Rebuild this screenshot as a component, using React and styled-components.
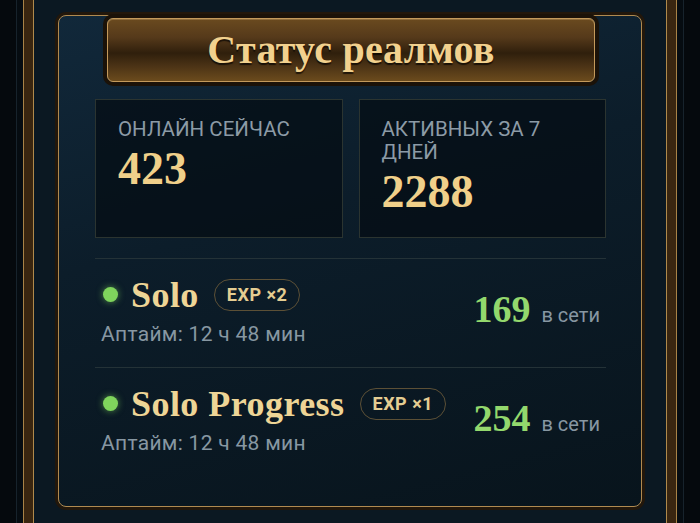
import React from "react";
import styled, { createGlobalStyle } from "styled-components";

const Global = createGlobalStyle`
  html, body { margin: 0; padding: 0; background: #05090d; }
  body { font-family: Roboto, "Noto Sans", sans-serif; }
  * { box-sizing: border-box; }
`;

const Page = styled.div`
  min-height: 523px;
  height: 100vh;
  background: #05090d;
  padding: 0 16px;
  display: flex;
`;

const FaintLine = styled.div`
  flex: 1;
  display: flex;
  border-left: 1px solid #17232c;
  border-right: 1px solid #17232c;
  background: #060c11;
  padding: 0 6px;
`;

const Rail = styled.div`
  flex: 1;
  display: flex;
  background: #3a2610;
  border-left: 1px solid #a98347;
  border-right: 1px solid #a98347;
  padding: 0 9px;
`;

const Inner = styled.div`
  flex: 1;
  background: #0b1822;
  border-left: 1px solid #b08a4c;
  border-right: 1px solid #b08a4c;
  padding: 15px 24px 0 24px;
`;

const Panel = styled.section`
  border: 1px solid #b08a50;
  border-radius: 8px;
  box-shadow: 0 0 0 3px #22170b;
  background: linear-gradient(165deg, #11283a 0%, #0c1d2a 40%, #08141c 100%);
  padding: 2px 35px 30px 36px;
  display: flex;
  flex-direction: column;
`;

const Banner = styled.header`
  align-self: center;
  width: 488px;
  height: 64px;
  margin-right: -1px;
  border: 1.5px solid #c49a5b;
  border-radius: 6px;
  box-shadow: 0 0 0 4px #1b1208, inset 0 1px 0 rgba(255, 220, 150, 0.25);
  background: linear-gradient(
    180deg,
    #6a4a1f 0%,
    #55391a 30%,
    #2f1f0c 55%,
    #4a3215 75%,
    #6b4b1d 100%
  );
  display: flex;
  align-items: center;
  justify-content: center;
`;

const Title = styled.h1`
  margin: 0;
  font-family: "Liberation Serif", "DejaVu Serif", serif;
  font-weight: 700;
  font-size: 40px;
  letter-spacing: 0.3px;
  color: #f2d18e;
  text-shadow: 0 2px 1px rgba(0, 0, 0, 0.65);
  line-height: 1;
`;

const Stats = styled.div`
  margin-top: 17px;
  display: grid;
  grid-template-columns: 1fr 1fr;
  gap: 16px;
`;

const StatBox = styled.div`
  border: 1px solid #2b3430;
  background: rgba(4, 13, 19, 0.72);
  padding: 18px 22px 19px;
`;

const StatLabel = styled.div`
  font-family: Roboto, sans-serif;
  font-size: 20.5px;
  line-height: 23px;
  color: #8c9ba6;
  text-transform: uppercase;
`;

const StatValue = styled.div`
  margin-top: 3px;
  font-family: "Liberation Serif", serif;
  font-weight: 700;
  font-size: 46px;
  line-height: 1.1;
  color: #f0d08a;
`;

const List = styled.div`
  margin-top: 20px;
  border-top: 1px solid #243237;
`;

const Row = styled.div`
  display: flex;
  align-items: center;
  justify-content: space-between;
  padding: 16px 6px 21px 6px;
  & + & {
    border-top: 1px solid #243237;
  }
`;

const Info = styled.div`
  display: flex;
  flex-direction: column;
  gap: 7px;
`;

const NameLine = styled.div`
  display: flex;
  align-items: center;
  height: 40px;
`;

const Dot = styled.span`
  width: 15px;
  height: 15px;
  margin-left: 2px;
  border-radius: 50%;
  background: #7fd45c;
  box-shadow: 0 0 7px rgba(127, 212, 92, 0.6);
  flex: none;
`;

const Name = styled.span`
  margin-left: 13px;
  font-family: "Liberation Serif", serif;
  font-weight: 700;
  font-size: 36px;
  letter-spacing: 0.45px;
  line-height: 40px;
  color: #eed596;
`;

const Badge = styled.span`
  margin-left: 15px;
  height: 32px;
  padding: 0 12px;
  border: 1.5px solid #5c5036;
  border-radius: 16px;
  display: inline-flex;
  align-items: center;
  font-family: Roboto, sans-serif;
  font-weight: 700;
  font-size: 18px;
  letter-spacing: 0.5px;
  color: #e4cd92;
`;

const Uptime = styled.div`
  font-family: Roboto, sans-serif;
  font-size: 21px;
  letter-spacing: 0.3px;
  line-height: 24px;
  color: #8797a2;
`;

const Online = styled.div`
  display: flex;
  align-items: baseline;
  gap: 11px;
  margin-top: -3px;
`;

const Count = styled.span`
  font-family: "Liberation Serif", serif;
  font-weight: 700;
  font-size: 38px;
  line-height: 38px;
  color: #93d86d;
`;

const CountLabel = styled.span`
  font-family: Roboto, sans-serif;
  font-size: 20px;
  color: #8797a2;
`;

const realms = [
  { name: "Solo", exp: "EXP ×2", uptime: "Аптайм: 12 ч 48 мин", online: 169 },
  { name: "Solo Progress", exp: "EXP ×1", uptime: "Аптайм: 12 ч 48 мин", online: 254 },
];

export default function App() {
  return (
    <>
      <Global />
      <Page>
        <FaintLine>
          <Rail>
            <Inner>
              <Panel>
                <Banner>
                  <Title>Статус реалмов</Title>
                </Banner>
                <Stats>
                  <StatBox>
                    <StatLabel>Онлайн сейчас</StatLabel>
                    <StatValue>423</StatValue>
                  </StatBox>
                  <StatBox>
                    <StatLabel>Активных за 7 дней</StatLabel>
                    <StatValue>2288</StatValue>
                  </StatBox>
                </Stats>
                <List>
                  {realms.map((r) => (
                    <Row key={r.name}>
                      <Info>
                        <NameLine>
                          <Dot />
                          <Name>{r.name}</Name>
                          <Badge>{r.exp}</Badge>
                        </NameLine>
                        <Uptime>{r.uptime}</Uptime>
                      </Info>
                      <Online>
                        <Count>{r.online}</Count>
                        <CountLabel>в сети</CountLabel>
                      </Online>
                    </Row>
                  ))}
                </List>
              </Panel>
            </Inner>
          </Rail>
        </FaintLine>
      </Page>
    </>
  );
}
